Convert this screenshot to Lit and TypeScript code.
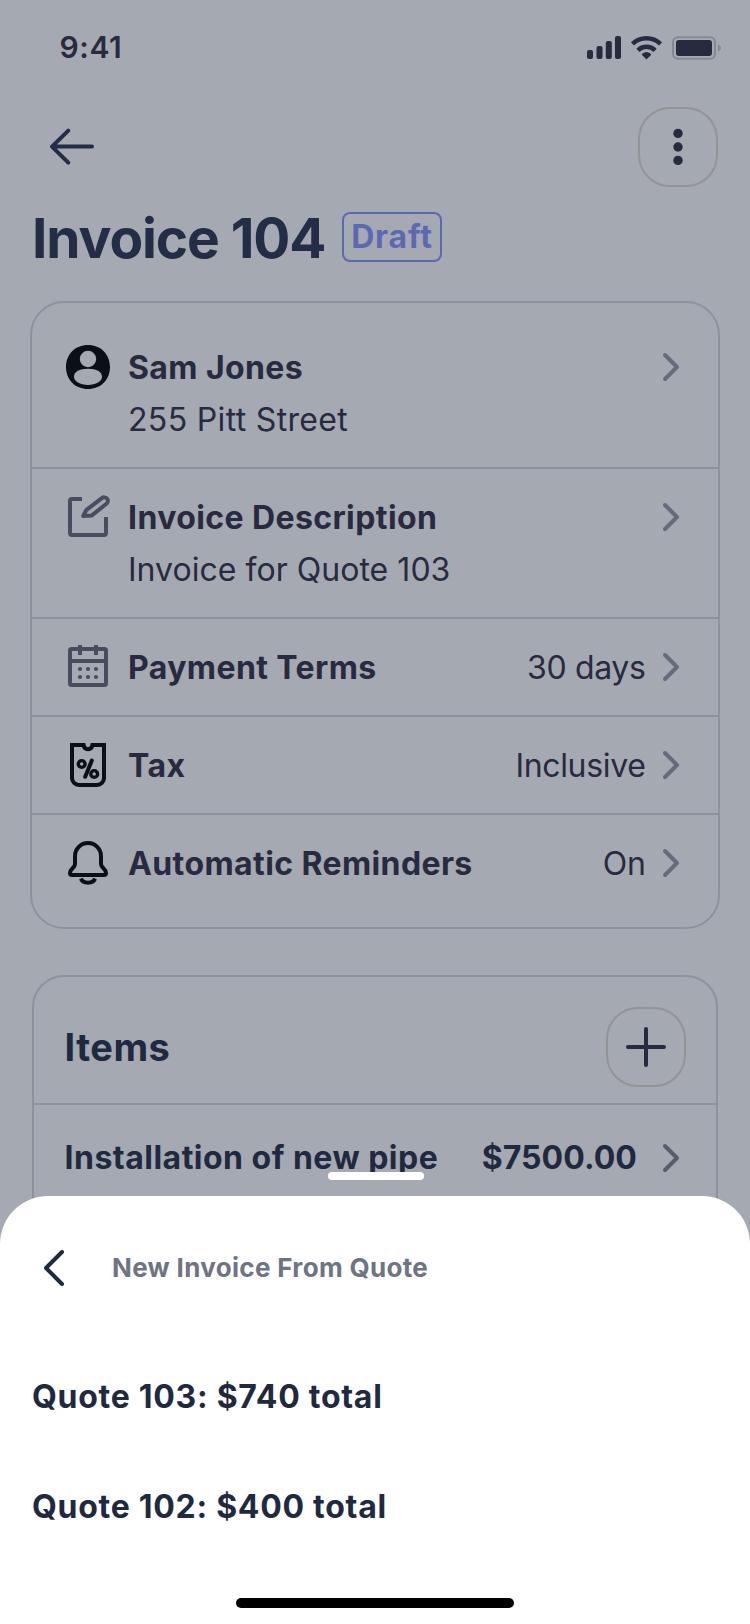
import { LitElement, html, css, svg, nothing } from "lit";
import { customElement, property } from "lit/decorators.js";

const icons = {
  user: svg`<path fill="#0b0f17" fill-rule="evenodd" d="M24 2C36.8 2 46 11.2 46 24S36.8 46 24 46 2 36.8 2 24 11.2 2 24 2ZM24 7.8a8.2 8.2 0 1 0 0 16.4 8.2 8.2 0 0 0 0-16.4ZM10 34C10 38 16 42 24 42S38 38 38 34C38 28.5 32.5 25.8 24 25.8S10 28.5 10 34Z"/>`,
  edit: svg`<g fill="none" stroke="#4a4d60" stroke-width="4" stroke-linejoin="round"><path d="M18 6H8a2 2 0 0 0-2 2V40a2 2 0 0 0 2 2H40a2 2 0 0 0 2-2V24"/><path d="M19.2 23L22.2 17.2L37.5 5.4C39.2 4 41.6 4 43 5.6C44.4 7.2 44 9.4 42.4 10.8L27.5 22.6Z"/></g>`,
  calendar: svg`<g fill="none" stroke="#4a4d60" stroke-width="4"><rect x="6" y="6" width="36" height="36" rx="1.5"/><path d="M6 18H42M16 2V12M32 2V12"/></g><g fill="#4a4d60"><circle cx="16" cy="26" r="2.1"/><circle cx="24" cy="26" r="2.1"/><circle cx="32" cy="26" r="2.1"/><circle cx="16" cy="34" r="2.1"/><circle cx="24" cy="34" r="2.1"/><circle cx="32" cy="34" r="2.1"/></g>`,
  tax: svg`<g fill="none" stroke="#0b0f17" stroke-width="4"><path d="M8 4H19.6C20 6.8 21.8 8.2 24 8.2S28 6.8 28.4 4H40V37a7 7 0 0 1-7 7H15a7 7 0 0 1-7-7Z"/><path d="M27.8 19.6L21.2 35.8" stroke-linecap="round"/><circle cx="17.7" cy="23" r="3.4" stroke-width="3.4"/><circle cx="30.2" cy="33" r="3.4" stroke-width="3.4"/></g>`,
  bell: svg`<g fill="none" stroke="#0b0f17" stroke-width="4" stroke-linejoin="round"><path d="M24 4C16.8 4 11 9.8 11 17V25C11 29 6 29.5 6 34a2 2 0 0 0 2 2H40a2 2 0 0 0 2-2C42 29.5 37 29 37 25V17C37 9.8 31.2 4 24 4Z"/><path d="M16.8 39.6C19.4 45 28.6 45 31.2 39.6"/></g>`,
  chevron: svg`<path d="M18 12L30 24L18 36" fill="none" stroke="currentColor" stroke-width="4" stroke-linecap="round" stroke-linejoin="round"/>`,
  plus: svg`<path d="M24 6V42M6 24H42" stroke="#282b40" stroke-width="4" stroke-linecap="round"/>`,
  more: svg`<g fill="#282b40"><circle cx="24" cy="10.4" r="4.7"/><circle cx="24" cy="24" r="4.7"/><circle cx="24" cy="37.4" r="4.7"/></g>`,
};

@customElement("ui-icon")
class UiIcon extends LitElement {
  @property() name: keyof typeof icons = "user";
  static styles = css`
    :host { display: block; flex: none; width: 48px; height: 48px; }
    svg { display: block; }
  `;
  render() {
    return html`<svg width="48" height="48" viewBox="0 0 48 48">${icons[this.name]}</svg>`;
  }
}

interface Row {
  icon: string;
  label: string;
  sub?: string;
  subClass?: string;
  value?: string;
}

const details: Row[] = [
  { icon: "user", label: "Sam Jones", sub: "255 Pitt Street", subClass: "sub wide" },
  { icon: "edit", label: "Invoice Description", sub: "Invoice for Quote 103" },
  { icon: "calendar", label: "Payment Terms", value: "30 days" },
  { icon: "tax", label: "Tax", value: "Inclusive" },
  { icon: "bell", label: "Automatic Reminders", value: "On" },
];

const quotes = ["Quote 103: $740 total", "Quote 102: $400 total"];

@customElement("app-root")
class AppRoot extends LitElement {
  static styles = css`
    :host {
      display: block;
      position: relative;
      width: 750px;
      height: 1624px;
      overflow: hidden;
      box-sizing: border-box;
      background: #a5a9b2;
      color: #282b40;
      font-family: Inter, sans-serif;
      font-size: 32px;
      line-height: 48px;
      white-space: nowrap;
    }
    * { box-sizing: border-box; }
    svg { display: block; flex: none; }
    .status { display: flex; justify-content: space-between; align-items: center; height: 95px; padding: 0 29px 0 59.5px; }
    .time { padding-bottom: 1px; font-size: 30px; font-weight: 560; letter-spacing: 0.6px; }
    .signals { display: flex; align-items: center; gap: 10px; }
    .nav { display: flex; justify-content: space-between; align-items: center; margin-top: 12px; padding: 0 32px 0 48px; }
    .round { display: grid; place-items: center; width: 80px; height: 80px; border: 2px solid #939496; border-radius: 32px; }
    .heading { display: flex; align-items: center; height: 50px; margin: 25px 32px 0; }
    h1 { margin: 0 18px 0 0; padding-top: 1px; width: 292px; font-size: 55px; line-height: 50px; font-weight: 700; letter-spacing: -1.1px; color: #232e46; }
    .badge { width: 100px; height: 50px; border: 2px solid #5c69b2; border-radius: 8px; text-align: center; line-height: 46px; font-weight: 700; letter-spacing: 0.85px; color: #5c69b2; }
    .card { border: 2px solid #8e929e; border-radius: 34px; }
    .details { margin: 39px 30px 0; padding: 16px 0; }
    .row { display: flex; align-items: flex-start; gap: 16px; padding: 24px 23px 24px 32px; }
    .row + .row { border-top: 2px solid #8e929e; }
    .text { flex: 1; display: flex; flex-direction: column; gap: 4px; padding-top: 1px; margin-bottom: -1px; }
    .label { font-weight: 700; letter-spacing: 0.4px; }
    .sub { letter-spacing: 0.03px; }
    .sub.wide { letter-spacing: 0.34px; }
    .value { padding-top: 1px; letter-spacing: -0.34px; margin: 0 -14.5px -1px 0; }
    .row ui-icon:last-child { color: #676a7b; }
    .items { margin: 46px 32px 0; height: 260px; border-radius: 32px; color: #1f2a40; }
    .items-head { display: flex; justify-content: space-between; align-items: center; height: 128px; padding: 14px 30px 0; border-bottom: 2px solid #8e929e; }
    h2 { margin: 0 0 0 0.5px; font-size: 38px; font-weight: 700; letter-spacing: 0.5px; }
    .item { display: flex; align-items: center; padding: 29px 21px 0 30.6px; font-weight: 700; letter-spacing: 0.48px; }
    .item .price { margin: 0 10px 0 auto; letter-spacing: 0.05px; }
    .item ui-icon { color: #565d6d; }
    .sheet { position: absolute; left: 0; right: 0; bottom: 0; height: 428px; padding: 24px 32px 0; border-radius: 48px 48px 0 0; background: #fff; color: #1f2a40; }
    .handle { position: absolute; left: 328px; top: -24px; width: 96px; height: 8px; border-radius: 4px; background: #fff; }
    .sheet-head { display: flex; align-items: center; height: 96px; gap: 48px; padding-left: 12px; font-size: 26px; font-weight: 700; letter-spacing: 0.33px; color: #6e7484; }
    .quotes { margin-top: 26px; font-weight: 700; letter-spacing: 0.72px; }
    .quote { height: 110px; line-height: 110px; }
    .home { width: 278px; height: 10px; margin: 36px auto 0; border-radius: 5px; background: #000; }
  `;

  private renderRow(r: Row) {
    return html`
      <div class="row">
        <ui-icon name=${r.icon}></ui-icon>
        <div class="text">
          <span class="label">${r.label}</span>
          ${r.sub ? html`<span class=${r.subClass ?? "sub"}>${r.sub}</span>` : nothing}
        </div>
        ${r.value ? html`<span class="value">${r.value}</span>` : nothing}
        <ui-icon name="chevron"></ui-icon>
      </div>`;
  }

  render() {
    return html`
      <div class="status">
        <span class="time">9:41</span>
        <div class="signals">
          <svg width="34" height="23" viewBox="0 0 34 23" fill="#282b40">
            <rect x="0" y="14" width="6" height="9" rx="2"/><rect x="9.5" y="10" width="6" height="13" rx="2"/><rect x="18.8" y="5" width="6" height="18" rx="2"/><rect x="28" y="0" width="6" height="23" rx="2"/>
          </svg>
          <svg width="31" height="24" viewBox="0 0 31 24" fill="none" stroke="#282b40" stroke-width="4.5">
            <path d="M1.5 8A20 20 0 0 1 29.5 8"/><path d="M6.9 14.3A12.4 12.4 0 0 1 24.1 14.3"/>
            <path d="M15.5 23.5L11 18.9Q10.7 18.2 11.5 17.5A6.5 6.5 0 0 1 19.5 17.5Q20.3 18.2 20 18.9Z" fill="#282b40" stroke="none"/>
          </svg>
          <svg width="49" height="24" viewBox="0 0 49 24">
            <rect x="1" y="1.2" width="42" height="21.6" rx="5" fill="none" stroke="#858994" stroke-width="2"/>
            <rect x="4" y="4" width="36" height="16" rx="3" fill="#282b40"/>
            <path d="M46 8.2Q49 9.6 49 12T46 15.8Z" fill="#858994"/>
          </svg>
        </div>
      </div>
      <div class="nav">
        <svg width="48" height="48" viewBox="0 0 48 48" fill="none" stroke="#232e46" stroke-width="4" stroke-linecap="round" stroke-linejoin="round"><path d="M20.3 7.6L4 23.6L20.3 39.6M4 23.6H44"/></svg>
        <div class="round"><ui-icon name="more"></ui-icon></div>
      </div>
      <div class="heading"><h1>Invoice 104</h1><span class="badge">Draft</span></div>
      <div class="card details">${details.map((r) => this.renderRow(r))}</div>
      <div class="card items">
        <div class="items-head"><h2>Items</h2><div class="round"><ui-icon name="plus"></ui-icon></div></div>
        <div class="item"><span>Installation of new pipe</span><span class="price">$7500.00</span><ui-icon name="chevron"></ui-icon></div>
      </div>
      <div class="sheet">
        <div class="handle"></div>
        <div class="sheet-head">
          <svg width="20" height="36" viewBox="0 0 20 36" fill="none" stroke="#1f2a40" stroke-width="4" stroke-linecap="round" stroke-linejoin="round"><path d="M18 2L2 18L18 34"/></svg>
          <span>New Invoice From Quote</span>
        </div>
        <div class="quotes">${quotes.map((q) => html`<div class="quote">${q}</div>`)}</div>
        <div class="home"></div>
      </div>`;
  }
}
